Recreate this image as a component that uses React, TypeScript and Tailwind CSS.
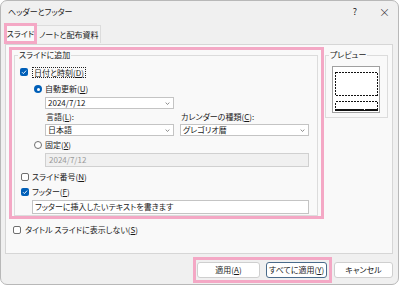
import { ReactNode } from 'react'

const pink = 'border-[#f4a8c5]'

function Check({ checked }: { checked?: boolean }) {
  if (checked) {
    return (
      <span className="flex h-[8px] w-[8px] shrink-0 items-center justify-center rounded-[2px] bg-[#005fb8]">
        <svg viewBox="0 0 8 8" className="h-[8px] w-[8px]">
          <path d="M2 4.2 3.4 5.6 6.1 2.6" fill="none" stroke="white" strokeWidth="0.9" />
        </svg>
      </span>
    )
  }
  return <span className="h-[8px] w-[8px] shrink-0 rounded-[2px] border border-[#6f6f6f] bg-white" />
}

function Radio({ checked }: { checked?: boolean }) {
  if (checked) {
    return (
      <span className="flex h-[8px] w-[8px] shrink-0 items-center justify-center rounded-full bg-[#005fb8]">
        <span className="h-[3px] w-[3px] rounded-full bg-white" />
      </span>
    )
  }
  return <span className="h-[8px] w-[8px] shrink-0 rounded-full border border-[#6f6f6f] bg-white" />
}

function Chevron() {
  return (
    <svg viewBox="0 0 6 4" className="h-[3px] w-[5px]">
      <path d="M0.5 0.8 3 3.2 5.5 0.8" fill="none" stroke="#555" strokeWidth="0.9" />
    </svg>
  )
}

function Select({ value, width }: { value: string; width: string }) {
  return (
    <div className={`flex h-[12px] items-center justify-between border border-[#c4c4c4] bg-white pl-[2px] pr-[3px] ${width}`}>
      <span>{value}</span>
      <Chevron />
    </div>
  )
}

function Acc({ k }: { k: string }) {
  return (
    <>
      (<span className="underline">{k}</span>)
    </>
  )
}

function Row({ children, className = '' }: { children: ReactNode; className?: string }) {
  return <div className={`flex h-[12px] items-center whitespace-nowrap ${className}`}>{children}</div>
}

function Button({ children, focused }: { children: ReactNode; focused?: boolean }) {
  return (
    <div
      className={`flex h-[16px] items-center justify-center whitespace-nowrap rounded-[3px] bg-white ${
        focused ? 'border-[1.5px] border-[#4a6b8a]' : 'border border-[#cfcfcf]'
      }`}
    >
      {children}
    </div>
  )
}

function Preview() {
  return (
    <svg viewBox="0 0 48 47" className="h-[47px] w-[48px]" shapeRendering="crispEdges">
      <rect x="0.5" y="0.5" width="47" height="46" fill="white" stroke="#a0a0a0" />
      <rect x="3.5" y="6.5" width="42" height="23" fill="none" stroke="#111" strokeDasharray="2 1" />
      <rect x="3.5" y="35.5" width="42" height="9" fill="none" stroke="#111" strokeDasharray="2 1" />
      <rect x="3" y="43" width="29" height="2" fill="#111" />
      <rect x="33" y="43" width="12" height="2" fill="#111" />
    </svg>
  )
}

export default function App() {
  return (
    <div className="h-[286px] w-[400px] overflow-hidden bg-white font-['Noto_Sans_CJK_JP',sans-serif] text-[8px] leading-[10px] text-[#1a1a1a] [font-feature-settings:'palt']">
      <div className="flex h-[285px] w-[399px] flex-col rounded-[7px] border border-[#b8b8b8] bg-[#f0f0f0]">
        {/* title bar */}
        <div className="flex h-[21px] items-center pl-[7px] pr-[8px]">
          <span>ヘッダーとフッター</span>
          <span className="ml-auto text-[9px]">?</span>
          <span className="ml-[22px] text-[11px] font-light">×</span>
        </div>

        {/* tabs */}
        <div className="flex h-[22px] items-end whitespace-nowrap pl-[3px]">
          <div className={`flex h-[21px] w-[33px] items-center justify-center border-[3px] ${pink} bg-[#f9f9f9]`}>
            スライド
          </div>
          <div className="mb-[1px] flex h-[18px] items-center border-r border-t border-[#dcdcdc] bg-[#f3f3f3] px-[2px]">
            ノートと配布資料
          </div>
        </div>

        {/* panel */}
        <div className="ml-[4px] flex h-[210px] w-[388px] flex-col border border-[#d6d6d6] bg-[#f9f9f9]">
          <div className="flex">
            <div className={`ml-[3px] mt-[2px] h-[172px] w-[315px] border-[3px] ${pink}`}>
              <fieldset className="ml-[2px] h-[166px] w-[304px] border border-[#dcdcdc]">
                <legend className="ml-[3px] px-[1px]">スライドに追加</legend>

                <Row className="ml-[5px] mt-[6px] gap-[4px]">
                  <Check checked />
                  <span className="border border-dotted border-[#222] px-[1px] leading-[9px]">
                    日付と時刻<Acc k="D" />
                  </span>
                </Row>

                <Row className="ml-[19px] mt-[5px] gap-[3px]">
                  <Radio checked />
                  <span>
                    自動更新<Acc k="U" />
                  </span>
                </Row>

                <div className="ml-[30px] mt-[2px]">
                  <Select value="2024/7/12" width="w-[129px]" />
                </div>

                <div className="ml-[30px] mt-[2px] grid w-[264px] grid-cols-[129px_129px] gap-x-[6px] gap-y-[1px] whitespace-nowrap">
                  <div className="flex h-[12px] items-center pl-[1px]">
                    言語<Acc k="L" />:
                  </div>
                  <div className="flex h-[12px] items-center pl-[1px]">
                    カレンダーの種類<Acc k="C" />:
                  </div>
                  <Select value="日本語" width="w-[129px]" />
                  <Select value="グレゴリオ暦" width="w-[129px]" />
                </div>

                <Row className="ml-[19px] mt-[3px] gap-[3px]">
                  <Radio />
                  <span>
                    固定<Acc k="X" />
                  </span>
                </Row>

                <div className="ml-[30px] mt-[2px] flex h-[14px] w-[264px] items-center border border-[#d0d0d0] bg-[#f0f0f0] pl-[3px] text-[#9a9a9a]">
                  2024/7/12
                </div>

                <Row className="ml-[6px] mt-[4px] gap-[3px]">
                  <Check />
                  <span>
                    スライド番号<Acc k="N" />
                  </span>
                </Row>

                <Row className="ml-[6px] mt-[3px] gap-[3px]">
                  <Check checked />
                  <span>
                    フッター<Acc k="F" />
                  </span>
                </Row>

                <div className="ml-[17px] mt-[2px] flex h-[14px] w-[277px] items-center whitespace-nowrap border border-[#c4c4c4] bg-white pl-[2px]">
                  フッターに挿入したいテキストを書きます
                </div>
              </fieldset>
            </div>

            <fieldset className="ml-[1px] mt-[5px] h-[68px] w-[63px] border border-[#dcdcdc]">
              <legend className="ml-[3px] px-[1px]">プレビュー</legend>
              <div className="ml-[6px] mt-[6px]">
                <Preview />
              </div>
            </fieldset>
          </div>

          <Row className="ml-[7px] mt-[5px] gap-[4px]">
            <Check />
            <span>
              タイトル スライドに表示しない<Acc k="S" />
            </span>
          </Row>
        </div>

        {/* footer buttons */}
        <div className="mt-[3px] flex items-center justify-end pr-[5px]">
          <div className={`flex items-center gap-[6px] border-[3px] ${pink} py-[2px] pl-[1px] pr-[2px]`}>
            <div className="w-[63px]">
              <Button>
                適用<Acc k="A" />
              </Button>
            </div>
            <div className="w-[61px]">
              <Button focused>
                すべてに適用<Acc k="Y" />
              </Button>
            </div>
          </div>
          <div className="ml-[2px] w-[59px]">
            <Button>キャンセル</Button>
          </div>
        </div>
      </div>
    </div>
  )
}
